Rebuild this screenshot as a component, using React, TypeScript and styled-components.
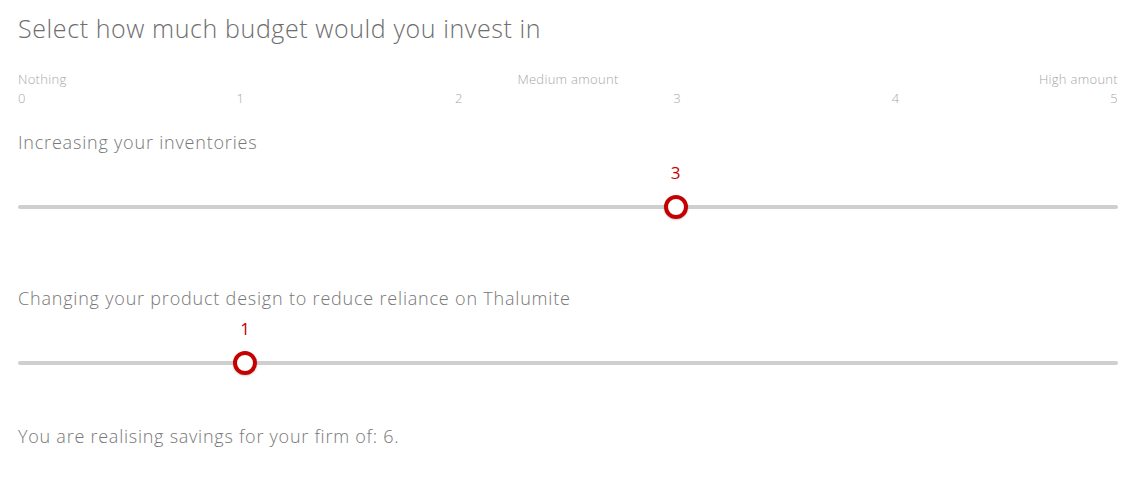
import React from "react";
import styled, { createGlobalStyle } from "styled-components";

const Global = createGlobalStyle`
  html, body { margin: 0; padding: 0; background: #ffffff; }
  body { font-family: "Open Sans", "Liberation Sans", sans-serif; font-weight: 300; }
`;

const Page = styled.div`
  width: 1100px;
  padding: 13px 0 0 18px;
  display: flex;
  flex-direction: column;
`;

const Title = styled.h1`
  margin: 0;
  font-size: 25px;
  letter-spacing: 0.6px;
  line-height: 30px;
  font-weight: 300;
  color: #6e6e6e;
`;

const Scale = styled.div`
  margin-top: 28px;
  display: flex;
  flex-direction: column;
  gap: 3px;
`;

const LabelRow = styled.div`
  display: grid;
  grid-template-columns: 1fr 1fr 1fr;
  font-size: 13px;
  letter-spacing: 0.3px;
  line-height: 16px;
  color: #a8a8a8;
  & > span:nth-child(2) { text-align: center; }
  & > span:nth-child(3) { text-align: right; }
`;

const NumberRow = styled.div`
  display: flex;
  justify-content: space-between;
  font-size: 13px;
  letter-spacing: 0.3px;
  line-height: 16px;
  color: #a8a8a8;
`;

const Question = styled.div<{ $top: number }>`
  margin-top: ${(p) => p.$top}px;
  display: flex;
  flex-direction: column;
`;

const QLabel = styled.div`
  font-size: 18px;
  letter-spacing: 0.8px;
  line-height: 24px;
  color: #777;
`;

const SliderArea = styled.div`
  position: relative;
  margin-top: 41px;
  height: 24px;
  display: flex;
  align-items: center;
`;

const Track = styled.div`
  flex: 1;
  height: 4px;
  border-radius: 2px;
  background: #cfcfcf;
`;

const Thumb = styled.div`
  position: absolute;
  top: 0;
  width: 24px;
  height: 24px;
  box-sizing: border-box;
  border: 4px solid #c40000;
  border-radius: 50%;
  background: #fff;
  box-shadow: 0 1px 2px rgba(0, 0, 0, 0.2);
`;

const ValueTag = styled.div`
  position: absolute;
  top: -32px;
  width: 24px;
  text-align: center;
  font-size: 17px;
  font-weight: 400;
  line-height: 20px;
  color: #c40000;
`;

const Savings = styled.div`
  margin-top: 49px;
  font-size: 18px;
  letter-spacing: 0.75px;
  line-height: 24px;
  color: #777;
`;

const WIDTH = 1100;
const THUMB = 24;

function Slider({ value, max }: { value: number; max: number }) {
  const left = ((WIDTH - THUMB) * value) / max;
  return (
    <SliderArea>
      <Track />
      <ValueTag style={{ left }}>{value}</ValueTag>
      <Thumb style={{ left }} />
    </SliderArea>
  );
}

export default function App() {
  return (
    <>
      <Global />
      <Page>
        <Title>Select how much budget would you invest in</Title>
        <Scale>
          <LabelRow>
            <span>Nothing</span>
            <span>Medium amount</span>
            <span>High amount</span>
          </LabelRow>
          <NumberRow>
            {[0, 1, 2, 3, 4, 5].map((n) => (
              <span key={n}>{n}</span>
            ))}
          </NumberRow>
        </Scale>
        <Question $top={24}>
          <QLabel>Increasing your inventories</QLabel>
          <Slider value={3} max={5} />
        </Question>
        <Question $top={67}>
          <QLabel>Changing your product design to reduce reliance on Thalumite</QLabel>
          <Slider value={1} max={5} />
        </Question>
        <Savings>You are realising savings for your firm of: 6.</Savings>
      </Page>
    </>
  );
}
